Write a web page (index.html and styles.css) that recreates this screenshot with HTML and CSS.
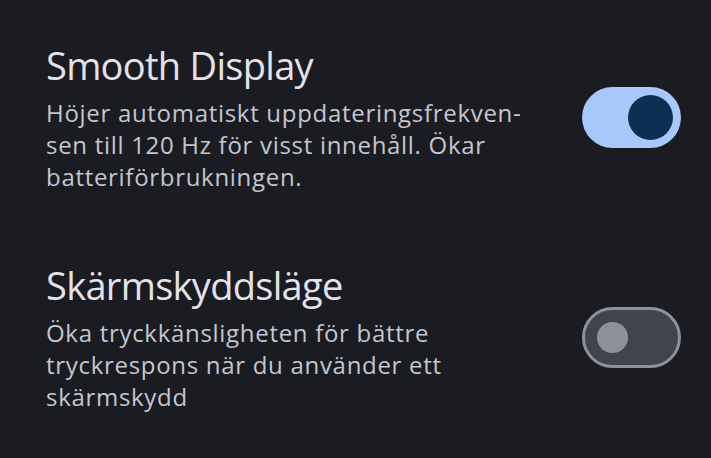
FILE: index.html
```html
<!DOCTYPE html>
<html lang="sv">
<head>
  <meta charset="UTF-8" />
  <title>Display settings</title>
  <meta name="viewport" content="width=device-width, initial-scale=1.0" />
  <link rel="stylesheet" href="styles.css">
</head>
<body>
  <div class="settings">
    <div class="setting-row">
      <div class="setting-text">
        <h2>Smooth Display</h2>
        <p>Höjer automatiskt uppdateringsfrekven-<br>sen till 120 Hz för visst innehåll. Ökar<br>batteriförbrukningen.</p>
      </div>
      <div class="switch on"><span class="knob"></span></div>
    </div>

    <div class="setting-row">
      <div class="setting-text">
        <h2>Skärmskyddsläge</h2>
        <p>Öka tryckkänsligheten för bättre<br>tryckrespons när du använder ett<br>skärmskydd</p>
      </div>
      <div class="switch off"><span class="knob"></span></div>
    </div>
  </div>
</body>
</html>
```

FILE: styles.css
```css
* {
  box-sizing: border-box;
  margin: 0;
  padding: 0;
  font-family: 'Open Sans', 'Noto Sans', sans-serif;
}
html, body {
  background-color: #1a1c22;
  height: 100%;
}
.settings {
  display: flex;
  flex-direction: column;
  gap: 69px;
  padding: 42px 30px 0 46px;
}
.setting-row {
  display: flex;
  align-items: center;
  justify-content: space-between;
}
.setting-text h2 {
  font-size: 38px;
  line-height: 46px;
  font-weight: 400;
  letter-spacing: -0.7px;
  color: #e3e2e9;
  margin-bottom: 9px;
}
.setting-text p {
  font-size: 24px;
  line-height: 32px;
  letter-spacing: 0.7px;
  color: #c4c6d0;
}
.switch {
  width: 99px;
  height: 61px;
  border-radius: 31px;
  display: flex;
  align-items: center;
  flex-shrink: 0;
}
.switch.on {
  background: #a8c7fa;
  justify-content: flex-end;
  padding-right: 8px;
}
.switch.on .knob {
  width: 45px;
  height: 45px;
  border-radius: 50%;
  background: #0e2f54;
}
.switch.off {
  background: #40444c;
  border: 3px solid #8e9199;
  padding-left: 12px;
}
.switch.off .knob {
  width: 31px;
  height: 31px;
  border-radius: 50%;
  background: #8e9199;
}
```
